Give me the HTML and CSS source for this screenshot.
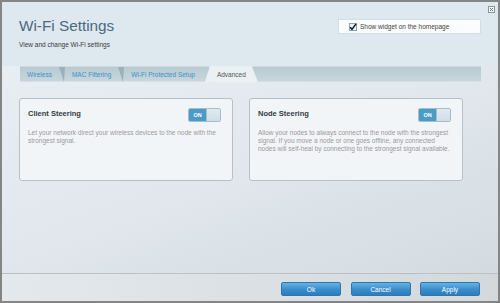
FILE: index.html
```html
<!DOCTYPE html>
<html>
<head>
<meta charset="utf-8">
<link rel="stylesheet" href="styles.css">
</head>
<body>
<div class="dialog">
  <div class="header">
    <div class="heading">
      <h1 class="title">Wi-Fi Settings</h1>
      <p class="subtitle">View and change Wi-Fi settings</p>
    </div>
    <label class="widget">
      <span class="checkbox">
        <svg width="8" height="8" viewBox="0 0 8 8"><path d="M1.2 4.2 L3 6.3 L7 0.8" fill="none" stroke="#111" stroke-width="1.4"/></svg>
      </span>
      <span>Show widget on the homepage</span>
    </label>
    <span class="close">
      <svg width="7" height="7" viewBox="0 0 7 7"><rect x="0.5" y="0.5" width="6" height="6" fill="#f4f6f8" stroke="#8a949b"/><path d="M2 2 L5 5 M5 2 L2 5" stroke="#6d777e" stroke-width="1"/></svg>
    </span>
  </div>
  <div class="tabs">
    <span class="tab">Wireless</span>
    <span class="sep"><svg width="6" height="15" viewBox="0 0 6 15"><polygon points="0,0 6,0 5,15" fill="#9db0b9"/></svg></span>
    <span class="tab">MAC Filtering</span>
    <span class="sep"><svg width="6" height="15" viewBox="0 0 6 15"><polygon points="0,0 6,0 5,15" fill="#9db0b9"/></svg></span>
    <span class="tab">Wi-Fi Protected Setup</span>
    <span class="tab active">Advanced</span>
    <span class="rest"></span>
  </div>
  <div class="content">
    <div class="card">
      <div class="card-head">
        <span class="card-title">Client Steering</span>
        <span class="toggle"><span class="on">ON</span><span class="knob"></span></span>
      </div>
      <p class="desc">Let your network direct your wireless devices to the node with the strongest signal.</p>
    </div>
    <div class="card">
      <div class="card-head">
        <span class="card-title">Node Steering</span>
        <span class="toggle"><span class="on">ON</span><span class="knob"></span></span>
      </div>
      <p class="desc">Allow your nodes to always connect to the node with the strongest signal. If you move a node or one goes offline, any connected nodes will self-heal by connecting to the strongest signal available.</p>
    </div>
  </div>
  <div class="footer">
    <button class="btn">Ok</button>
    <button class="btn">Cancel</button>
    <button class="btn">Apply</button>
  </div>
</div>
</body>
</html>
```
FILE: styles.css
```css
* { box-sizing: border-box; }
html, body { margin: 0; padding: 0; background: #fff; }
body { font-family: "Liberation Sans", Arial, sans-serif; }

.dialog {
  width: 500px;
  height: 303px;
  border: 2px solid #858585;
  display: flex;
  flex-direction: column;
  background: linear-gradient(160deg, #e9eff3 0%, #e2e8ed 50%, #d1d9df 100%);
}

.header {
  position: relative;
  height: 64px;
  background: #dee8ef;
  display: flex;
  justify-content: space-between;
  align-items: flex-start;
  padding: 15px 17px 0 17px;
}
.title {
  margin: 0;
  font-weight: normal;
  font-size: 15.3px;
  line-height: 18px;
  color: #4a6a80;
}
.subtitle {
  margin: 6px 0 0 0;
  font-size: 6.5px;
  line-height: 8px;
  color: #3a3a3a;
}
.widget {
  margin-top: 2px;
  width: 143px;
  height: 15px;
  background: #fbfcfd;
  border: 1px solid #d3dde4;
  display: flex;
  align-items: center;
  gap: 3px;
  padding-left: 10px;
  font-size: 6.5px;
  color: #444;
}
.checkbox {
  width: 8px;
  height: 8px;
  border: 1px solid #7fa8c4;
  background: #e8f1f7;
  display: flex;
  align-items: center;
  justify-content: center;
  overflow: visible;
}
.checkbox svg { flex: none; }
.close {
  position: absolute;
  right: 3px;
  top: 4px;
  line-height: 0;
}

.tabs {
  margin: 0 17px 0 18px;
  height: 16px;
  display: flex;
  align-items: stretch;
  background: linear-gradient(#b7cad2, #c8d6dc);
  border-top: 1px solid #cfdbe1;
  border-bottom: 1px solid #d6e0e5;
}
.tab {
  font-size: 6.5px;
  color: #3d90c8;
  padding: 0 7px;
  display: flex;
  align-items: center;
}
.sep { line-height: 0; display: flex; }
.tab.active {
  color: #555;
  background: #ebf0f3;
  padding: 0 12px 0 12px;
  margin: -1px 0 -1px 3px;
  clip-path: polygon(5px 0, calc(100% - 6px) 0, 100% 100%, 0 100%);
}
.rest { flex: 1; }

.content {
  flex: 1;
  display: grid;
  grid-template-columns: 214px 214px;
  column-gap: 16px;
  align-content: start;
  padding: 16px 0 0 17px;
}
.card {
  height: 83px;
  border: 1px solid #b7c0c8;
  border-radius: 3px;
  background: #f2f5f7;
  padding: 9px 11px 0 8px;
}
.card-head {
  display: flex;
  justify-content: space-between;
  align-items: flex-start;
}
.card-title {
  font-size: 7.5px;
  font-weight: bold;
  color: #303a44;
  margin-top: 1px;
}
.toggle {
  display: flex;
  width: 33px;
  height: 14px;
  border: 1px solid #a8bcc6;
  border-radius: 2px;
  overflow: hidden;
}
.on {
  width: 17px;
  background: #4a9bc6;
  color: #fff;
  font-size: 5.5px;
  font-weight: bold;
  display: flex;
  align-items: center;
  justify-content: center;
}
.knob {
  flex: 1;
  background: linear-gradient(#e1ebf0, #cfdee6);
  border-left: 1px solid #a9bdc7;
}
.desc {
  margin: 7px 0 0 0;
  font-size: 6.5px;
  line-height: 8px;
  color: #9a9a9a;
}

.footer {
  height: 28px;
  border-top: 1px solid #b9c1c7;
  background: linear-gradient(90deg, #e4e9ed, #d2d8dc);
  display: flex;
  justify-content: flex-end;
  align-items: flex-start;
  gap: 9.5px;
  padding: 8px 18px 0 0;
}
.btn {
  width: 60px;
  height: 14px;
  border: 1px solid #3475a8;
  border-radius: 2px;
  background: linear-gradient(#62b3e6, #3a8cca 55%, #2c7dbd);
  color: #fff;
  font-family: "Liberation Sans", Arial, sans-serif;
  font-size: 6.5px;
  padding: 0;
}
```
